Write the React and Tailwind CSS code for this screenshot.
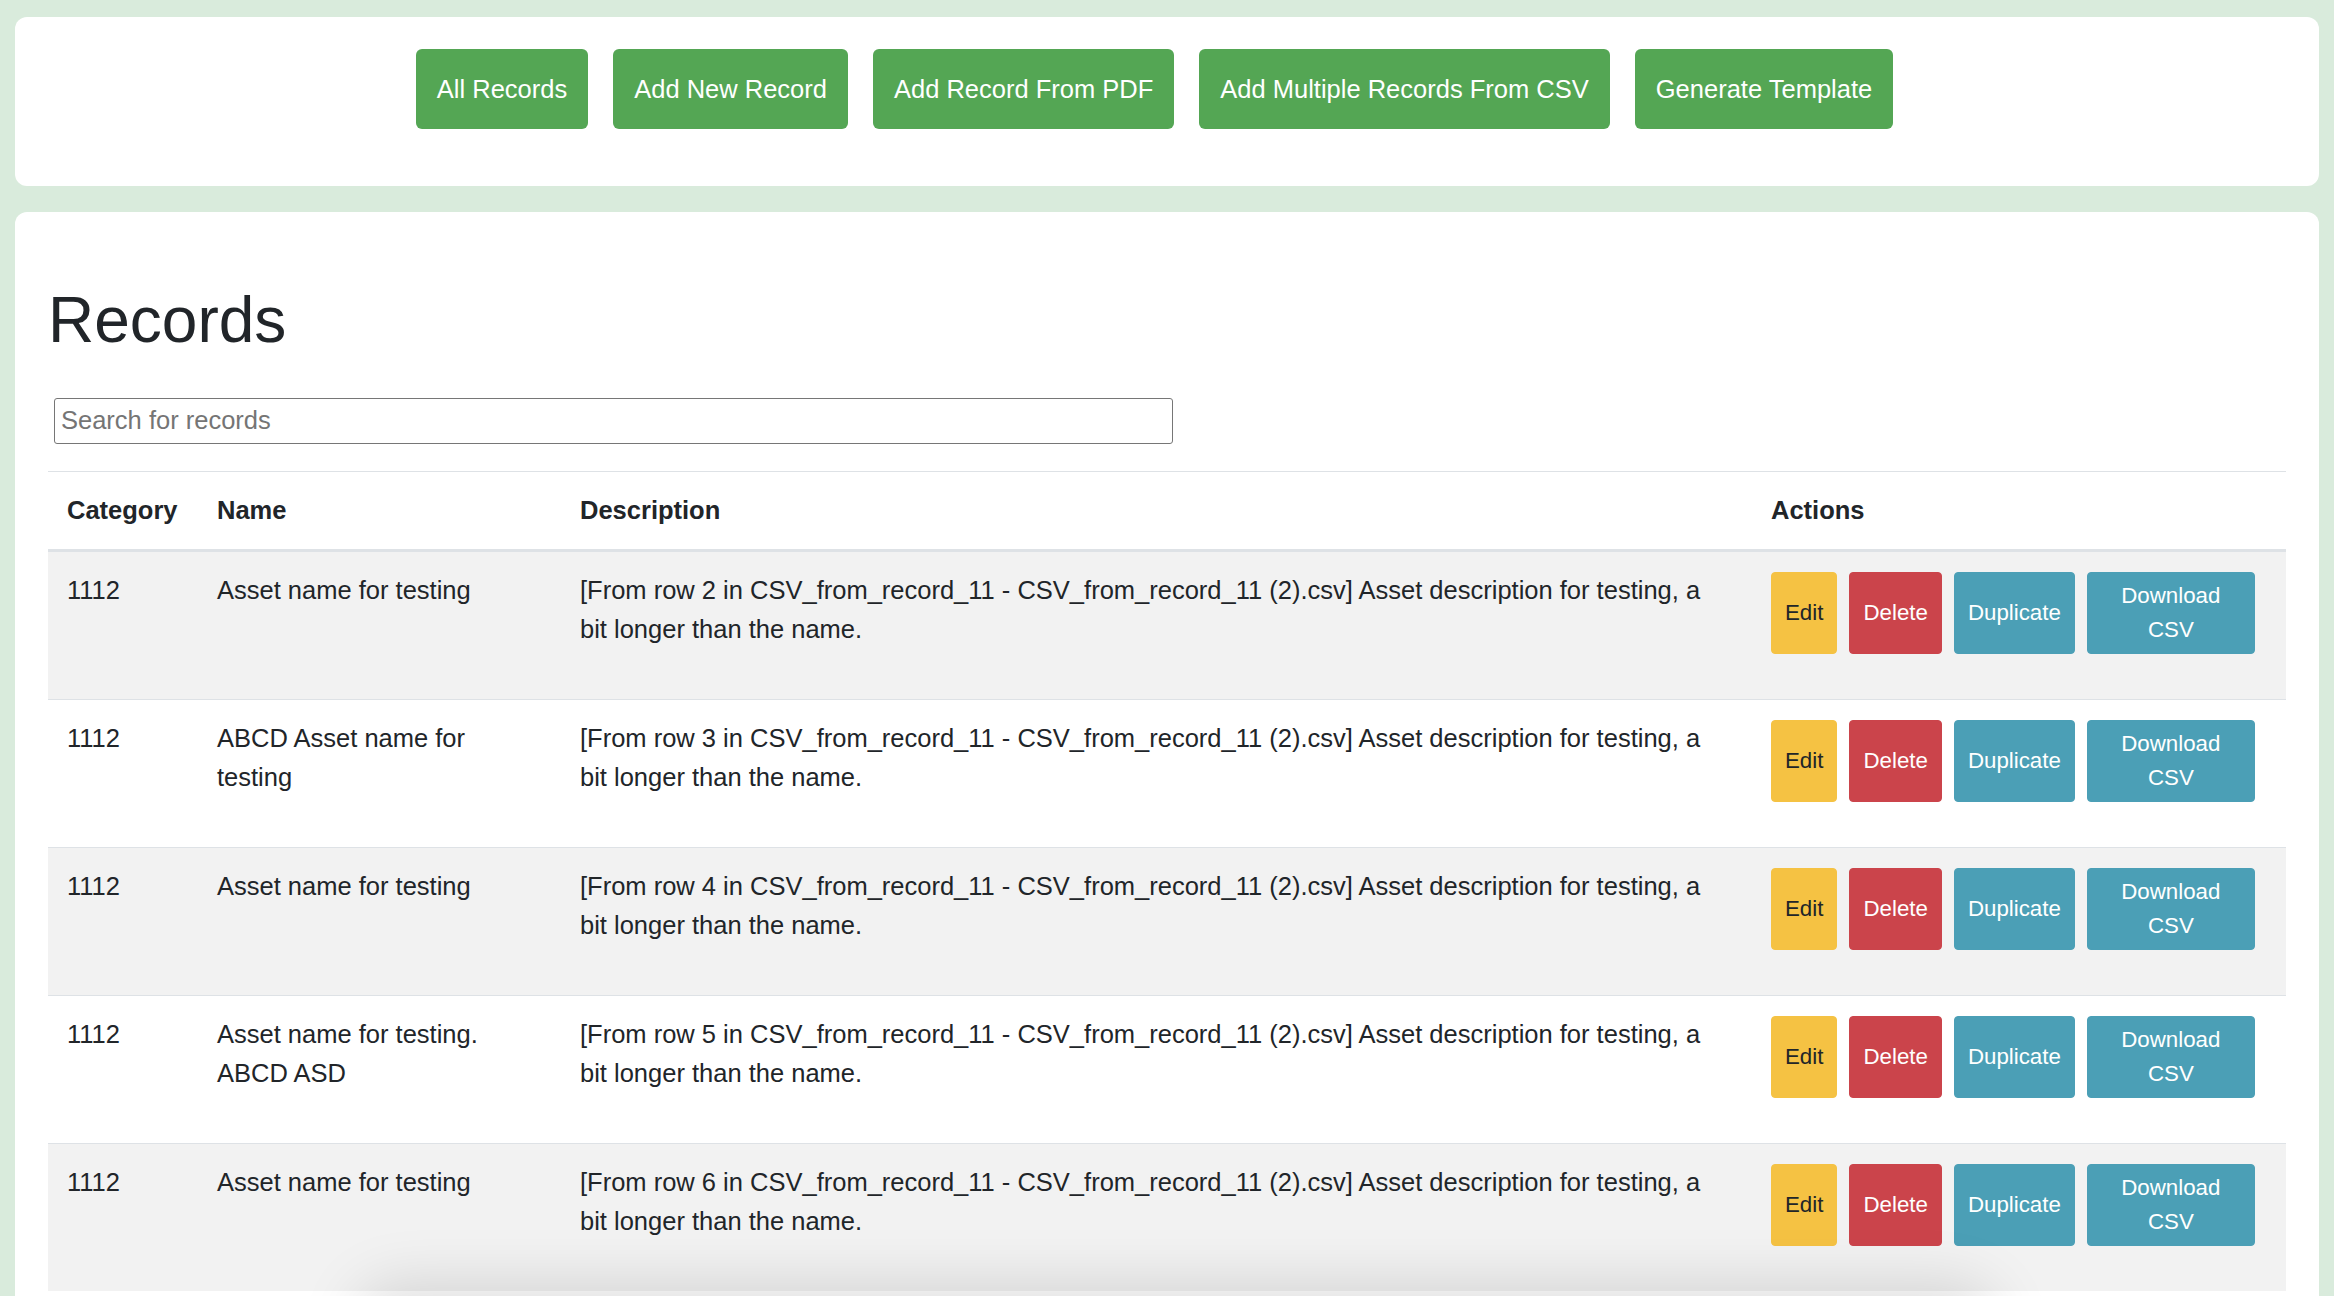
import React from 'react';

const navButtons = [
  'All Records',
  'Add New Record',
  'Add Record From PDF',
  'Add Multiple Records From CSV',
  'Generate Template',
];

const records = [
  { id: 2, category: '1112', name: 'Asset name for testing' },
  { id: 3, category: '1112', name: 'ABCD Asset name for testing' },
  { id: 4, category: '1112', name: 'Asset name for testing' },
  { id: 5, category: '1112', name: 'Asset name for testing. ABCD ASD' },
  { id: 6, category: '1112', name: 'Asset name for testing' },
];

function ActionButtons() {
  return (
    <div className="flex gap-[12px] mt-[1px] mb-[26px]">
      <button className="bg-[#f5c243] text-[#212529] text-[22.3px] leading-[34px] px-[13px] py-[6px] rounded-[4px] border border-[#f5c243]">
        Edit
      </button>
      <button className="bg-[#cb444b] text-white text-[22.3px] leading-[34px] px-[13px] py-[6px] rounded-[4px] border border-[#cb444b]">
        Delete
      </button>
      <button className="bg-[#4b9fb6] text-white text-[22.3px] leading-[34px] px-[13px] py-[6px] rounded-[4px] border border-[#4b9fb6]">
        Duplicate
      </button>
      <button className="w-[168px] bg-[#4b9fb6] text-white text-[22.3px] leading-[34px] px-[13px] py-[6px] rounded-[4px] border border-[#4b9fb6] text-center">
        Download CSV
      </button>
    </div>
  );
}

export default function App() {
  return (
    <div className="relative h-screen overflow-hidden bg-[#d9ebdc] px-[15px] pt-[17px] font-['Liberation_Sans',Arial,sans-serif] text-[#212529]">
      {/* Top nav card */}
      <div className="bg-white rounded-[12px] pt-[32px] pb-[57px] flex justify-center">
        {navButtons.map((label) => (
          <button
            key={label}
            className="h-[80px] px-[21px] mr-[25px] bg-[#54a654] text-white text-[25.5px] rounded-[6px] flex items-center"
          >
            {label}
          </button>
        ))}
      </div>

      {/* Records card */}
      <div className="mt-[26px] bg-white rounded-t-[12px] px-[33px] pt-[70px] pb-[40px]">
        <h1 className="text-[64px] leading-[1.2] font-normal">Records</h1>

        <div className="mt-[39px]">
          <input
            type="text"
            placeholder="Search for records"
            className="ml-[6px] w-[1119px] h-[46px] border border-[#767676] rounded-[3px] px-[6px] text-[25.5px] placeholder:text-[#757575] outline-none"
          />
        </div>

        <table className="mt-[27px] w-full table-fixed border-collapse text-[25.5px] leading-[39px]">
          <colgroup>
            <col className="w-[150px]" />
            <col className="w-[363px]" />
            <col className="w-[1191px]" />
            <col />
          </colgroup>
          <thead>
            <tr>
              <th className="text-left font-bold p-[19px] border-t border-[#dee2e6] border-b-[3px] border-b-[#dee2e6]">Category</th>
              <th className="text-left font-bold p-[19px] border-t border-[#dee2e6] border-b-[3px] border-b-[#dee2e6]">Name</th>
              <th className="text-left font-bold p-[19px] border-t border-[#dee2e6] border-b-[3px] border-b-[#dee2e6]">Description</th>
              <th className="text-left font-bold p-[19px] border-t border-[#dee2e6] border-b-[3px] border-b-[#dee2e6]">Actions</th>
            </tr>
          </thead>
          <tbody>
            {records.map((rec, i) => (
              <tr key={rec.id} className={i % 2 === 0 ? 'bg-[#f2f2f2]' : 'bg-white'}>
                <td className="align-top p-[19px] border-t border-[#dee2e6]">{rec.category}</td>
                <td className="align-top p-[19px] border-t border-[#dee2e6]">{rec.name}</td>
                <td className="align-top p-[19px] border-t border-[#dee2e6]">
                  [From row {rec.id} in CSV_from_record_11 - CSV_from_record_11 (2).csv] Asset description for testing, a bit longer than the name.
                </td>
                <td className="align-top p-[19px] border-t border-[#dee2e6]">
                  <ActionButtons />
                </td>
              </tr>
            ))}
          </tbody>
        </table>
      </div>

      {/* shadow of a floating panel just below the viewport */}
      <div className="absolute left-[372px] top-[1300px] w-[1608px] h-[120px] rounded-[24px] bg-white shadow-[0_0_60px_16px_rgba(0,0,0,0.13)]" />
    </div>
  );
}
